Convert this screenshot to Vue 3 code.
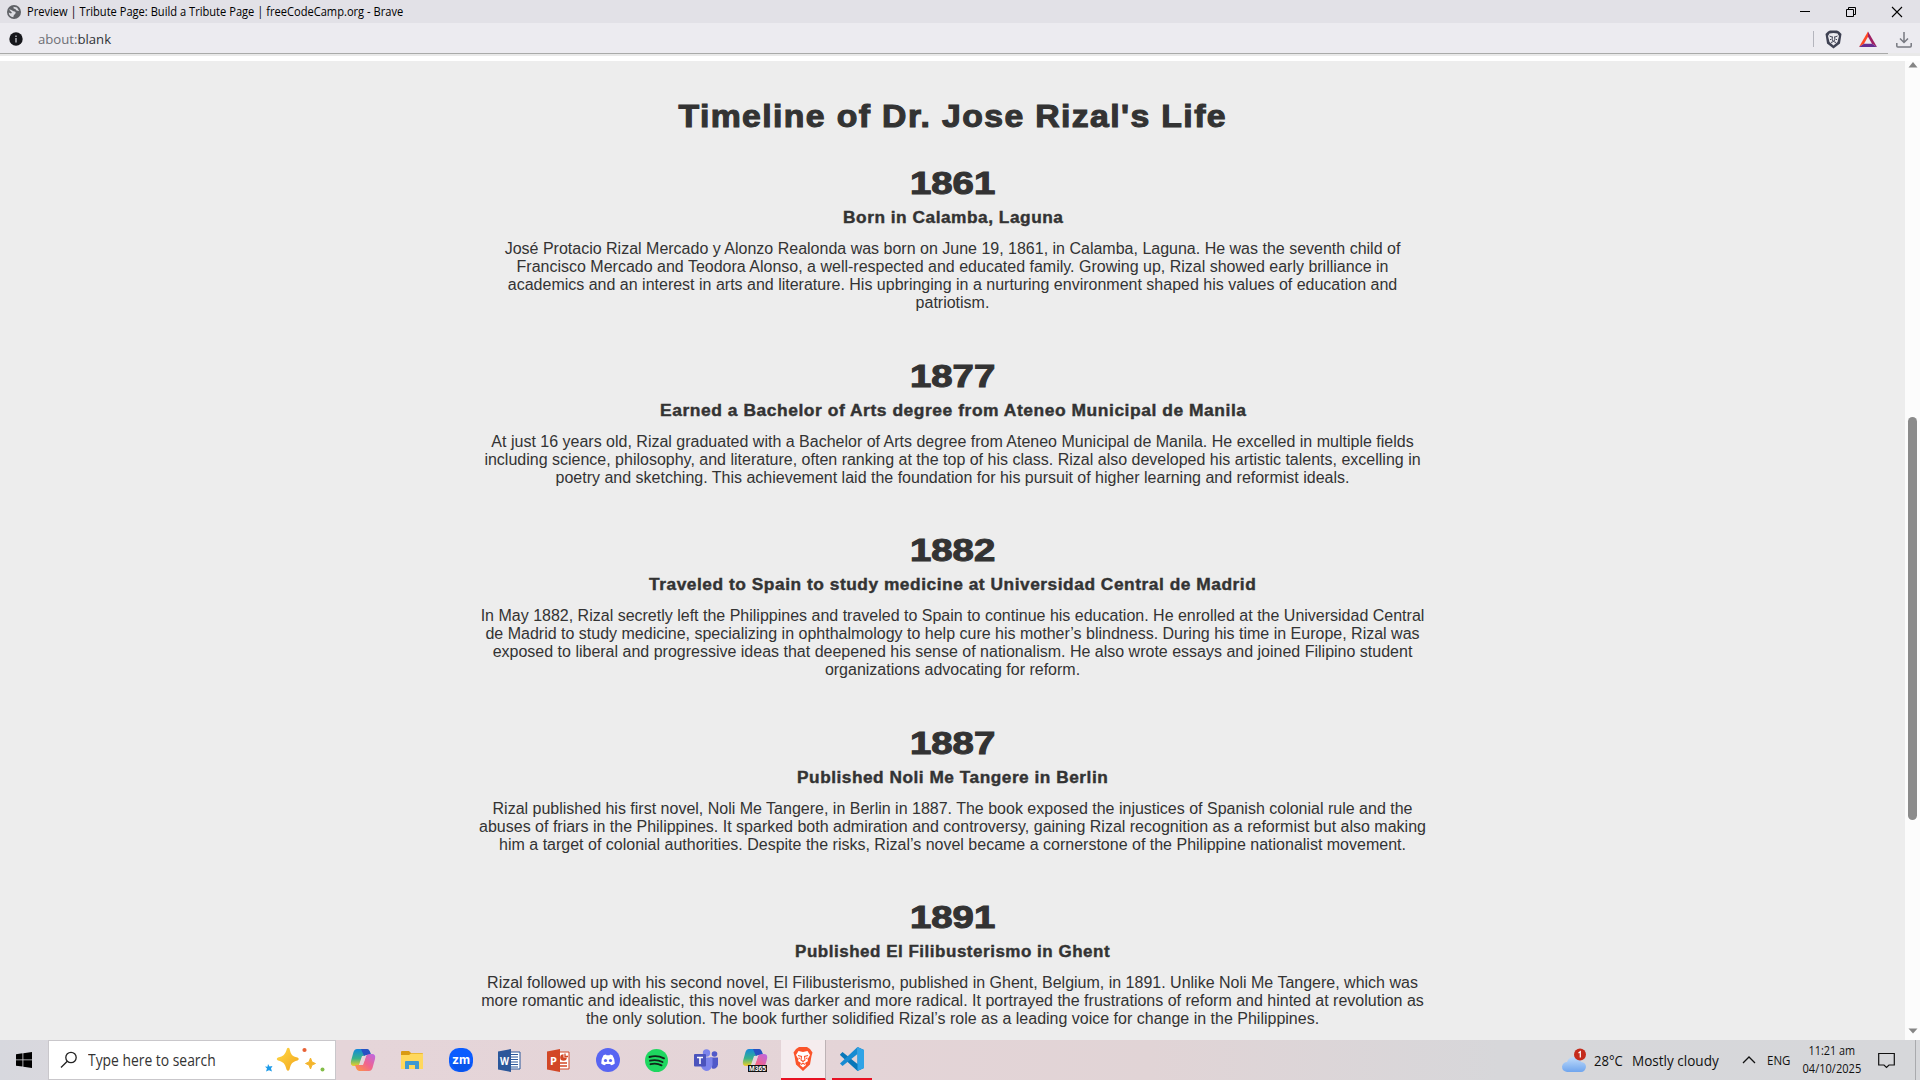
<script setup>
// Stretches a line of text horizontally to the given width
const vFit = {
  mounted(el, { value }) {
    el.style.width = 'max-content'
    const natural = el.offsetWidth
    el.style.width = ''
    el.style.transform = `scaleX(${value / natural})`
  },
}

const events = [
  { year: '1861', title: 'Born in Calamba, Laguna', w: 221, lines: [
    'José Protacio Rizal Mercado y Alonzo Realonda was born on June 19, 1861, in Calamba, Laguna. He was the seventh child of',
    'Francisco Mercado and Teodora Alonso, a well-respected and educated family. Growing up, Rizal showed early brilliance in',
    'academics and an interest in arts and literature. His upbringing in a nurturing environment shaped his values of education and',
    'patriotism.'] },
  { year: '1877', title: 'Earned a Bachelor of Arts degree from Ateneo Municipal de Manila', w: 587, lines: [
    'At just 16 years old, Rizal graduated with a Bachelor of Arts degree from Ateneo Municipal de Manila. He excelled in multiple fields',
    'including science, philosophy, and literature, often ranking at the top of his class. Rizal also developed his artistic talents, excelling in',
    'poetry and sketching. This achievement laid the foundation for his pursuit of higher learning and reformist ideals.'] },
  { year: '1882', title: 'Traveled to Spain to study medicine at Universidad Central de Madrid', w: 608, lines: [
    'In May 1882, Rizal secretly left the Philippines and traveled to Spain to continue his education. He enrolled at the Universidad Central',
    'de Madrid to study medicine, specializing in ophthalmology to help cure his mother’s blindness. During his time in Europe, Rizal was',
    'exposed to liberal and progressive ideas that deepened his sense of nationalism. He also wrote essays and joined Filipino student',
    'organizations advocating for reform.'] },
  { year: '1887', title: 'Published Noli Me Tangere in Berlin', w: 312, lines: [
    'Rizal published his first novel, Noli Me Tangere, in Berlin in 1887. The book exposed the injustices of Spanish colonial rule and the',
    'abuses of friars in the Philippines. It sparked both admiration and controversy, gaining Rizal recognition as a reformist but also making',
    'him a target of colonial authorities. Despite the risks, Rizal’s novel became a cornerstone of the Philippine nationalist movement.'] },
  { year: '1891', title: 'Published El Filibusterismo in Ghent', w: 316, lines: [
    'Rizal followed up with his second novel, El Filibusterismo, published in Ghent, Belgium, in 1891. Unlike Noli Me Tangere, which was',
    'more romantic and idealistic, this novel was darker and more radical. It portrayed the frustrations of reform and hinted at revolution as',
    'the only solution. The book further solidified Rizal’s role as a leading voice for change in the Philippines.'] },
]
</script>

<template>
  <div class="window">
    <header class="titlebar">
      <svg class="globe" width="14" height="14" viewBox="0 0 14 14">
        <circle cx="7" cy="7" r="7" fill="#5f6166" />
        <path d="M2 4.500C4 4 5 5.500 6.500 6.200S9 6.500 8.600 8 6.500 9.500 6.400 12.300C3.500 12 1.800 10 1.700 7.500L4 8.500 5 7.800ZM6.500 1.800 10 2.500 12.200 6 9.500 5.500 8.300 4 6.600 3.600Z" fill="#dcdce2" />
      </svg>
      <span class="ui left" v-fit="376">Preview | Tribute Page: Build a Tribute Page | freeCodeCamp.org - Brave</span>
      <div class="controls">
        <svg width="46" height="22" viewBox="0 0 46 22"><path d="M18 10.500H28" stroke="#000" /></svg>
        <svg width="46" height="22" viewBox="0 0 46 22" fill="none" stroke="#000"><path d="M18.500 8.500h7v7h-7zM20.500 8V6.500h7v7H26" /></svg>
        <svg width="46" height="22" viewBox="0 0 46 22"><path d="M18 6 28 16M28 6 18 16" stroke="#000" stroke-width="1.100" /></svg>
      </div>
    </header>

    <div class="addressbar">
      <svg class="info" width="14" height="14" viewBox="0 0 14 14"><circle cx="7" cy="7" r="6.700" fill="#16171b" /><path d="M7 3.500v1.500M7 6v4.500" stroke="#c8c8ce" stroke-width="1.300" /></svg>
      <span class="ui left url" v-fit="73"><span>about:</span>blank</span>
      <div class="tools">
        <i class="divider"></i>
        <svg width="17" height="19" viewBox="0 0 17 19">
          <path d="M3 1.500 5 .5h7l2 1L16.500 4 15 13.500 8.500 18.500 2 13.500.5 4Z" fill="#3f4253" />
          <path d="M4.500 3.500 8.500 3 12.500 3.500 14 6 12.500 12 8.500 15.500 4.500 12 3 6Z" fill="#ecebf0" />
          <path d="M4.500 6 7 7M12.500 6 10 7M7.500 6.500 7 10 8.500 11 10 10 9.500 6.500M6 12.500 8.500 11.500 11 12.500M5 9 6 10M12 9 11 10" stroke="#3f4253" fill="none" />
        </svg>
        <svg class="bat" width="18" height="17" viewBox="0 0 18 17">
          <path d="M9 .5 0 16 5 12.700 9 5.800Z" fill="#ff4724" />
          <path d="M9 .5 18 16 13 12.700 9 5.800Z" fill="#9e1f63" />
          <path d="M0 16H18L13 12.700H5Z" fill="#662d91" />
        </svg>
        <svg width="16" height="17" viewBox="0 0 16 17" fill="none" stroke="#777980" stroke-width="1.500"><path d="M8 1v10M4 7.500 8 11.500 12 7.500M.8 12v3q0 1 1 1h12.400q1 0 1-1v-3" /></svg>
      </div>
    </div>
    <div class="seam"><i></i></div>

    <div class="viewport">
      <main>
        <h2><span v-fit="549">Timeline of Dr. Jose Rizal's Life</span></h2>
        <section v-for="e in events" :key="e.year">
          <h3><span v-fit="85">{{ e.year }}</span></h3>
          <h4><span v-fit="e.w">{{ e.title }}</span></h4>
          <p><span v-for="l in e.lines" :key="l">{{ l }}</span></p>
        </section>
      </main>
      <aside class="scroll">
        <svg width="10" height="6" viewBox="0 0 10 6"><path d="M5 0 9.500 5.500H.5Z" fill="#858585" /></svg>
        <i class="thumb"></i>
        <svg width="10" height="6" viewBox="0 0 10 6"><path d="M5 5.500 9.500.5H.5Z" fill="#858585" /></svg>
      </aside>
    </div>

    <footer class="taskbar">
      <div class="start">
        <svg width="16" height="16" viewBox="0 0 16 16"><path d="M0 2.200 6.500 1.300V7.500H0ZM7.300 1.200 16 0V7.500H7.300ZM0 8.300H6.500V14.600L0 13.700ZM7.300 8.300H16V16L7.300 14.700Z" /></svg>
      </div>
      <div class="search">
        <svg width="18" height="18" viewBox="0 0 18 18" fill="none" stroke="#222" stroke-width="1.300"><circle cx="11" cy="6.500" r="5.200" /><path d="M7.300 10.200 1 16.500" /></svg>
        <span class="ui left ask" v-fit="128">Type here to search</span>
        <svg class="sparkles" width="62" height="26" viewBox="0 0 62 26">
          <defs><linearGradient id="gold" x1="0" y1="0" x2="1" y2="1"><stop offset="0" stop-color="#ffda45" /><stop offset="1" stop-color="#f2a51d" /></linearGradient></defs>
          <path d="M24 1.500Q25 0 26.500 1.500C28 8 29 9 34.500 10.500Q37 12 34.500 13.500C29 15 28 16.500 26.500 22.500Q25 25 23.500 22.500C22 16.500 20.500 15 15 13.500Q12.500 12 15 10.500C20.500 9 22 8 24 1.500Z" fill="url(#gold)" />
          <path d="M47.500 11 49 15 52.500 16.500 49 18 47.500 22 46 18 42.500 16.500 46 15Z" fill="#f4b52c" stroke="#f4b52c" stroke-linejoin="round" />
          <path d="M5 17 6.500 19.500 9.500 19 8 21.500 9 24.500 6 23.200 3 24.500 4 21.500 2 19.500 4.500 19.700Z" fill="#1d9be9" />
          <circle cx="41.500" cy="3" r="2.100" fill="#e86236" /><circle cx="59.500" cy="22.500" r="2" fill="#83bd48" />
        </svg>
      </div>

      <div class="apps">
        <div class="app">
          <svg width="26" height="24" viewBox="0 0 26 24">
            <defs>
              <linearGradient id="ca" x1="0" y1="0" x2="0" y2="1"><stop stop-color="#1488dc" /><stop offset=".55" stop-color="#38b28b" /><stop offset="1" stop-color="#f0cf25" /></linearGradient>
              <linearGradient id="cb" x1="1" y1="0" x2="0" y2="1"><stop stop-color="#b868e8" /><stop offset=".5" stop-color="#f1648d" /><stop offset="1" stop-color="#ff9b3c" /></linearGradient>
            </defs>
            <path d="M7 1H17Q19 1 20 4L21 7H16Q13 7 12 10L10 16Q9 18 6 18H4Q0 18 1 13L3.500 4Q4.500 1 7 1Z" fill="url(#ca)" />
            <path d="M11 1h6q2 0 3 3l1 3h-5l-2 1z" fill="#2851c3" />
            <path d="M19 23H9Q7 23 6 20L5 17H10Q13 17 14 14L16 8Q17 6 20 6H22Q26 6 25 11L22.500 20Q21.500 23 19 23Z" fill="url(#cb)" />
            <path d="M12 8h4l-3 9H9z" fill="#e4d6dc" />
          </svg>
        </div>
        <div class="app">
          <svg width="22" height="19" viewBox="0 0 22 19"><path d="M0 1Q0 0 1 0H8L10 2H21Q22 2 22 3V18H0Z" fill="#d99a13" /><path d="M0 4H8L10 2.500H22V18H0Z" fill="#ffd85d" /><path d="M4 18V11Q4 10 5 10H17Q18 10 18 11V18H14V14H8V18Z" fill="#3f99d2" /></svg>
        </div>
        <div class="app">
          <svg width="24" height="24" viewBox="0 0 24 24"><rect width="24" height="24" rx="10" fill="#0b5cff" /><path d="M2 14Q5 23 12 24 21 23 23 14Z" fill="#0644c8" opacity=".35" /><text x="12" y="15.500" text-anchor="middle" textLength="18" lengthAdjust="spacingAndGlyphs" class="zm">zm</text></svg>
        </div>
        <div class="app">
          <svg width="23" height="23" viewBox="0 0 23 23"><path d="M12 3h10v17H12z" fill="#fff" stroke="#2b579a" /><path d="M13 5.500h7M13 8h7M13 10.500h7M13 13h7M13 15.500h7M13 18h7" stroke="#2b579a" /><path d="M0 2.500 13 0V23L0 20.500Z" fill="#2b579a" /><text x="6.500" y="15.500" text-anchor="middle" textLength="9" lengthAdjust="spacingAndGlyphs" class="letter">W</text></svg>
        </div>
        <div class="app">
          <svg width="23" height="23" viewBox="0 0 23 23"><path d="M12 3h10v17H12z" fill="#fff" stroke="#d24726" /><circle cx="16.500" cy="8.500" r="3.300" fill="#d24726" /><path d="M16.500 8.500V4.500h4v4z" fill="#fff" /><path d="M18 4.500v3h3M13 14h7M13 17h7" fill="none" stroke="#d24726" stroke-width="1.300" /><path d="M0 2.500 13 0V23L0 20.500Z" fill="#d24726" /><text x="6.500" y="15.500" text-anchor="middle" class="letter">P</text></svg>
        </div>
        <div class="app">
          <svg width="24" height="24" viewBox="0 0 24 24"><circle cx="12" cy="12" r="12" fill="#5865f2" /><path d="M8 7Q9 6.500 10 6.500L10.500 7.300H13.500L14 6.500Q15 6.500 16.500 7.200 19 11 18.800 15.500 17 17 15 17.300L14.200 16H9.800L9 17.300Q7 17 5.200 15.500 5 11 7.500 7.200Z" fill="#fff" /><circle cx="9.500" cy="12.500" r="1.600" fill="#5865f2" /><circle cx="14.500" cy="12.500" r="1.600" fill="#5865f2" /></svg>
        </div>
        <div class="app">
          <svg width="23" height="23" viewBox="0 0 23 23"><circle cx="11.500" cy="11.500" r="11.500" fill="#1ed760" /><path d="M4.500 8Q12 5.800 19 9.300M5 11.700Q11.500 10 17.500 13M5.500 15.200Q11.500 13.700 16.500 16.300" fill="none" stroke="#10251a" stroke-width="1.900" stroke-linecap="round" /></svg>
        </div>
        <div class="app">
          <svg width="24" height="22" viewBox="0 0 24 22"><circle cx="20.500" cy="5" r="2.800" fill="#5059c9" /><path d="M16 8.500h8v7q-1 5-6 4z" fill="#5059c9" /><circle cx="12.500" cy="4" r="3.700" fill="#7b83eb" /><path d="M7 8.500H18.500V16Q17 22 12 22 8 21 7 17Z" fill="#7b83eb" /><rect y="5" width="12" height="12.500" rx="1" fill="#4b53bc" /><path d="M3 8.500h6M6 8.500v6.500" stroke="#fff" stroke-width="1.600" /></svg>
        </div>
        <div class="app">
          <svg width="26" height="24" viewBox="0 0 26 24">
            <path d="M7 1H17Q19 1 20 4L21 7H16Q13 7 12 10L10 16Q9 18 6 18H4Q0 18 1 13L3.500 4Q4.500 1 7 1Z" fill="url(#ca)" /><path d="M11 1h6q2 0 3 3l1 3h-5l-2 1z" fill="#2851c3" />
            <path d="M19 23H9L5 17H10Q13 17 14 14L16 8Q17 6 20 6H22Q26 6 25 11L22.500 20Q21.500 23 19 23Z" fill="url(#cb)" />
            <path d="M12 8h4l-3 9H9z" fill="#e4d6dc" />
            <path d="M6 17h19v7H6z" fill="#111" /><text x="15.500" y="23" text-anchor="middle" textLength="17" lengthAdjust="spacingAndGlyphs" class="tag">M365</text>
          </svg>
        </div>
        <div class="app active">
          <svg width="20" height="24" viewBox="0 0 20 24"><path d="M3 2 6 0H14L17 2 19.500 5.500 18.500 9 17 17.500 10 24 3 17.500 1.500 9 .5 5.500Z" fill="#fb542b" /><path d="M10 5 14.500 4 17 8 14.500 12.500 15 14 12 16 13 18 10 20.500 7 18 8 16 5 14 5.500 12.500 3 8 5.500 4Z" fill="#fff" /><path d="M5 8.500 8.500 9.500 8 13 10 14.500 12 13 11.500 9.500 15 8.500M8 17.500 10 16.200 12 17.500M7 11.500 5.500 11M13 11.500 14.500 11" fill="none" stroke="#fb542b" stroke-width="1.100" /></svg>
        </div>
        <div class="app running">
          <svg width="24" height="24" viewBox="0 0 24 24"><path d="M17.500 0 24 3V21L17.500 24 .5 8.500 0 7.500 2.500 5 17.500 17Z" fill="#0877b9" /><path d="M17.500 0V7L2.500 19 0 16.500Z" fill="#168bd2" /><path d="M17.500 0 24 3V21L17.500 24Z" fill="#30a3e6" /></svg>
        </div>
      </div>

      <div class="tray">
        <svg class="cloud" width="26" height="25" viewBox="0 0 26 25">
          <defs><linearGradient id="sky" x1="0" y1="0" x2="0" y2="1"><stop stop-color="#c0dcfb" /><stop offset="1" stop-color="#6fa5ee" /></linearGradient></defs>
          <path d="M5 24Q0 23 0 18.500 1 14 5 14 7 8.500 12.500 9 18 9.500 19 14 24 14.500 24 19 23 24 19 24Z" fill="url(#sky)" />
          <circle cx="18" cy="6.500" r="6" fill="#c42b1c" /><path d="M16.500 5 18.300 3.700V9.500" fill="none" stroke="#fff" stroke-width="1.200" />
        </svg>
        <span class="ui left temp" v-fit="29">28°C</span>
        <span class="ui left sky" v-fit="87">Mostly cloudy</span>
        <svg class="chev" width="14" height="8" viewBox="0 0 14 8"><path d="M1 7 7 1 13 7" fill="none" stroke="#111" stroke-width="1.300" /></svg>
        <span class="ui left lang" v-fit="23">ENG</span>
        <div class="clock"><span class="ui" v-fit="47">11:21 am</span><span class="ui" v-fit="59">04/10/2025</span></div>
        <svg class="note" width="17" height="17" viewBox="0 0 17 17"><path d="M.7 1.500H16.300V13H11L8.500 15.500 6 13H.7Z" fill="none" stroke="#111" stroke-width="1.200" /></svg>
        <i class="peek"></i>
      </div>
    </footer>
  </div>
</template>

<style>
body { overflow: hidden; }
</style>

<style scoped>
* { box-sizing: border-box; }
svg { display: block; flex: none; }
.window { width: 1920px; height: 1080px; display: flex; flex-direction: column; overflow: hidden; background: #ededed; font-family: "Liberation Sans", Arial, sans-serif; }
.ui { display: inline-block; flex: none; white-space: nowrap; font-family: "Open Sans", "Noto Sans", sans-serif; font-size: 12px; color: #111; }
.left { transform-origin: left center; }
.titlebar { height: 23px; flex: none; display: flex; align-items: center; padding-left: 7px; background: #e2e1e7; }
.titlebar .ui { margin-left: 6px; font-size: 12px; color: #000; }
.controls { margin-left: auto; display: flex; }
.addressbar { height: 30px; flex: none; display: flex; align-items: center; padding: 2px 0 0 9px; background: #ecebf0; }
.url { margin-left: 15px; font-size: 13.500px; color: #303136; }
.url span { color: #6e6f75; }
.tools { margin-left: auto; display: flex; align-items: center; padding-right: 8px; }
.divider { width: 1px; height: 16px; margin-right: 11px; background: #b4b5bd; }
.bat { margin: 0 19px 0 17px; }
.seam { height: 3px; flex: none; background: #e9e9e9; }
.seam i { display: block; width: 1888px; height: 1px; background: #a9aaa9; }
.viewport { height: 984px; flex: none; display: flex; border-top: 5px solid #fff; }
main { width: 1905px; height: 979px; overflow: hidden; background: #ededed; color: #333; text-align: center; padding-top: 33px; }
h2, h3, h4, p { margin: 0; white-space: nowrap; }
h2 span, h3 span, h4 span { display: inline-block; }
h2, h3 { height: 45px; font-size: 32px; line-height: 45px; font-weight: 700; -webkit-text-stroke: 1.100px #333; }
h2 { margin-bottom: 22px; letter-spacing: 1.300px; }
h4 { height: 23px; font-size: 16px; line-height: 23px; letter-spacing: 0.500px; -webkit-text-stroke: 0.400px #333; }
h2 span, h4 span { padding-left: 1px; }
section { margin-bottom: 41.600px; }
p { margin-top: 11px; font-size: 16px; line-height: 18px; }
p span { display: block; }
.scroll { width: 15px; background: #fcfcfc; display: flex; flex-direction: column; align-items: center; padding: 1px 0 6px 0; }
.thumb { width: 9px; height: 403px; margin: 349px 0 auto; border-radius: 5px; background: #8b8b8b; }
.taskbar { height: 40px; flex: none; display: flex; background: linear-gradient(90deg, #d7d8de 0, #dcd8dd 120px, #e5d5d9 340px, #e4d4d7 860px, #e1d4d6 1150px, #d7d7da 1500px, #d6d7da 100%); }
.start { width: 48px; display: flex; align-items: center; justify-content: center; }
.search { width: 288px; height: 40px; display: flex; align-items: center; padding-left: 11px; background: #fff; border: 1px solid #c9c7cb; }
.ask { margin-left: 10px; width: 128px; font-size: 15.500px; color: #333; }
.sparkles { margin-left: 47px; }
.apps { display: flex; padding-left: 2px; }
.app { width: 49px; display: flex; align-items: center; justify-content: center; }
.active { width: 45px; margin: 0 4px 0 2px; background: #f5ecee; border-bottom: 2px solid #e81123; border-right: 1px solid #bdb2b5; }
.running { width: 40px; margin-left: 2px; border-bottom: 2px solid #e81123; }
.zm { font: 700 12px "Inter", sans-serif; fill: #fff; }
.letter { font: 700 11px "Open Sans", sans-serif; fill: #fff; }
.tag { font: 700 7px "Liberation Sans", sans-serif; fill: #fff; }
.tray { margin-left: auto; width: 358px; display: flex; align-items: center; }
.temp { width: 29px; margin-left: 6px; font-size: 14px; }
.sky { width: 86px; margin-left: 9px; font-size: 14px; }
.chev { margin-left: 24px; }
.lang { width: 23px; margin-left: 11px; }
.clock { width: 62px; margin-left: 11px; display: flex; flex-direction: column; align-items: center; }
.clock .ui { line-height: 18px; }
.note { margin-left: 15px; }
.peek { width: 1px; height: 40px; margin-left: auto; margin-right: 4px; background: #a9aaad; }
</style>
